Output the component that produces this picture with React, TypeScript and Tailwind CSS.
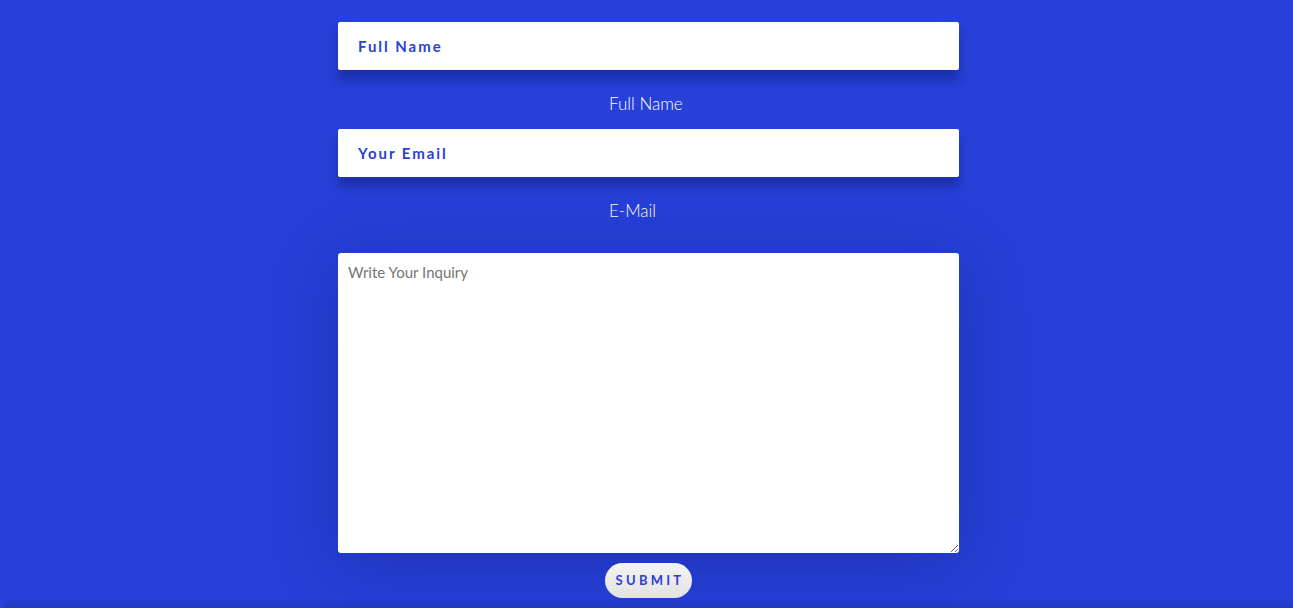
export default function App() {
  return (
    <div className="flex h-[608px] w-full flex-col overflow-hidden bg-[#2640d8] pl-[4px] font-['Lato','Liberation_Sans',sans-serif]">
      <form className="mx-auto flex w-[621px] flex-col pt-[22px]" onSubmit={(e) => e.preventDefault()}>
        <input
          type="text"
          placeholder="Full Name"
          className="h-12 w-full rounded-[2px] bg-white px-5 text-[15px] font-bold tracking-[0.13em] text-[#2a40d6] shadow-[0_10px_10px_rgba(10,20,90,0.35)] outline-none placeholder:text-[#2a40d6]"
        />
        <label className="mt-6 ml-[271px] block text-[17px] leading-5 font-light text-white">Full Name</label>
        <input
          type="email"
          placeholder="Your Email"
          className="mt-[15px] h-12 w-full rounded-[2px] bg-white px-5 text-[15px] font-bold tracking-[0.13em] text-[#2a40d6] shadow-[0_10px_10px_rgba(10,20,90,0.35)] outline-none placeholder:text-[#2a40d6]"
        />
        <label className="mt-6 ml-[271px] block text-[17px] leading-5 font-light text-white">E-Mail</label>
        <textarea
          placeholder="Write Your Inquiry"
          className="mt-8 h-[300px] w-full rounded-[3px] bg-white px-[10px] py-[8px] text-[15px] text-[#555] shadow-[0_10px_70px_rgba(10,20,90,0.3)] outline-none placeholder:text-[#757575]"
        />
        <button
          type="submit"
          className="mx-auto mt-[10px] h-[35px] w-[87px] rounded-full bg-gradient-to-b from-[#f4f4f4] to-[#e2e2e2] pl-[3px] text-[13px] font-bold tracking-[0.25em] text-[#2a40d6]"
        >
          SUBMIT
        </button>
      </form>
      <div className="mt-auto h-[10px] w-full bg-gradient-to-b from-transparent to-[rgba(10,20,90,0.15)]" />
    </div>
  )
}
